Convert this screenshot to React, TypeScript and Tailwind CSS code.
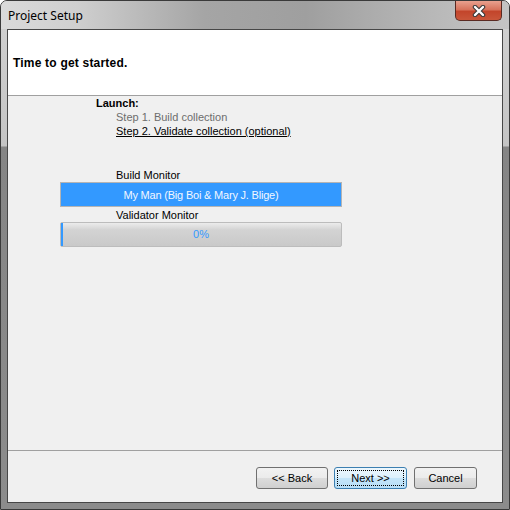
import React from "react";

const ui = { fontFamily: '"Liberation Sans", Arial, sans-serif' };
const title = { fontFamily: '"Noto Sans", "Open Sans", sans-serif' };

function CloseButton() {
  return (
    <div className="absolute right-[7px] top-0 w-[47px] h-[20px] rounded-b-[5px] border border-t-0 border-[#5a2a22] bg-[linear-gradient(to_bottom,#e9a18f_0%,#d7735c_45%,#c3452b_55%,#c9563a_100%)] flex items-center justify-center">
      <svg width="14" height="12" viewBox="0 0 14 12">
        <path d="M3 2 L11 10 M11 2 L3 10" stroke="#3a3a3a" strokeWidth="4.5" strokeLinecap="round" />
        <path d="M3 2 L11 10 M11 2 L3 10" stroke="#ffffff" strokeWidth="2.4" strokeLinecap="round" />
      </svg>
    </div>
  );
}

function Button({ label, width, focused }: { label: string; width: string; focused?: boolean }) {
  return (
    <div
      className={
        "h-[22px] rounded-[3px] border flex items-center justify-center text-[11px] text-black p-[2px] " +
        width +
        (focused
          ? " border-[#3c7fb1] bg-[linear-gradient(to_bottom,#edf7fd_0%,#dcf0fc_50%,#c4e5f9_51%,#b7def7_100%)]"
          : " border-[#707070] bg-[linear-gradient(to_bottom,#f2f2f2_0%,#ebebeb_50%,#dddddd_51%,#cfcfcf_100%)]")
      }
    >
      <div className={"w-full h-full flex items-center justify-center " + (focused ? "border border-dotted border-black" : "")}>
        {label}
      </div>
    </div>
  );
}

export default function App() {
  return (
    <div className="w-[510px] h-[510px] bg-white" style={ui}>
      <div className="relative w-[510px] h-[510px] rounded-t-[7px] border border-[#3a3a3a] bg-[linear-gradient(to_bottom,#d2d2d2_0px,#c4c4c4_145px,#858585_146px,#8c8c8c_100%)] flex flex-col">
        <div className="h-[28px] shrink-0 rounded-t-[6px] bg-[linear-gradient(to_right,#dadada_0%,#cfcfcf_15%,#a5a5a5_40%,#9f9f9f_60%,#b8b8b8_85%,#c4c4c4_100%)] flex items-center pl-[7px]">
          <span className="text-[12px] text-black leading-none mt-[1px]" style={title}>
            Project Setup
          </span>
          <CloseButton />
        </div>
        <div className="mx-[6px] flex-1 border border-[#474747] bg-[#f0f0f0] flex flex-col">
          <div className="h-[66px] shrink-0 bg-white border-b border-[#a0a0a0] flex items-center pl-[5px]">
            <span className="text-[12px] tracking-[0.2px] font-bold text-black">Time to get started.</span>
          </div>
          <div className="flex-1 flex flex-col text-[11px] leading-[14px]">
            <div className="pl-[88px] font-bold text-black">Launch:</div>
            <div className="pl-[108px] text-[#6d6d6d]">Step 1. Build collection</div>
            <div className="pl-[108px] text-black underline">Step 2. Validate collection (optional)</div>
            <div className="pl-[108px] mt-[30px] text-black">Build Monitor</div>
            <div className="ml-[52px] w-[282px] h-[25px] border border-[#b4b4b4] bg-[#3399ff] flex items-center justify-center text-[#f2f7ff] tracking-[-0.2px]">
              My Man (Big Boi &amp; Mary J. Blige)
            </div>
            <div className="pl-[108px] mt-[1px] text-black">Validator Monitor</div>
            <div className="ml-[52px] w-[282px] h-[25px] border border-[#bcbcbc] rounded-[2px] bg-[linear-gradient(to_bottom,#ececec_0%,#d3d3d3_30%,#c9c9c9_100%)] flex items-center relative">
              <div className="absolute left-0 top-0 bottom-0 w-[2px] bg-[#3399ff]" />
              <div className="w-full text-center text-[#3399ff] -mt-[1px]">0%</div>
            </div>
          </div>
          <div className="h-[52px] shrink-0 border-t border-[#a0a0a0] flex justify-end items-start pt-[16px] pr-[25px] gap-[6px]">
            <Button label="<< Back" width="w-[72px]" />
            <Button label="Next >>" width="w-[73px]" focused />
            <div className="ml-[1px]">
              <Button label="Cancel" width="w-[63px]" />
            </div>
          </div>
        </div>
        <div className="h-[6px] shrink-0" />
      </div>
    </div>
  );
}
